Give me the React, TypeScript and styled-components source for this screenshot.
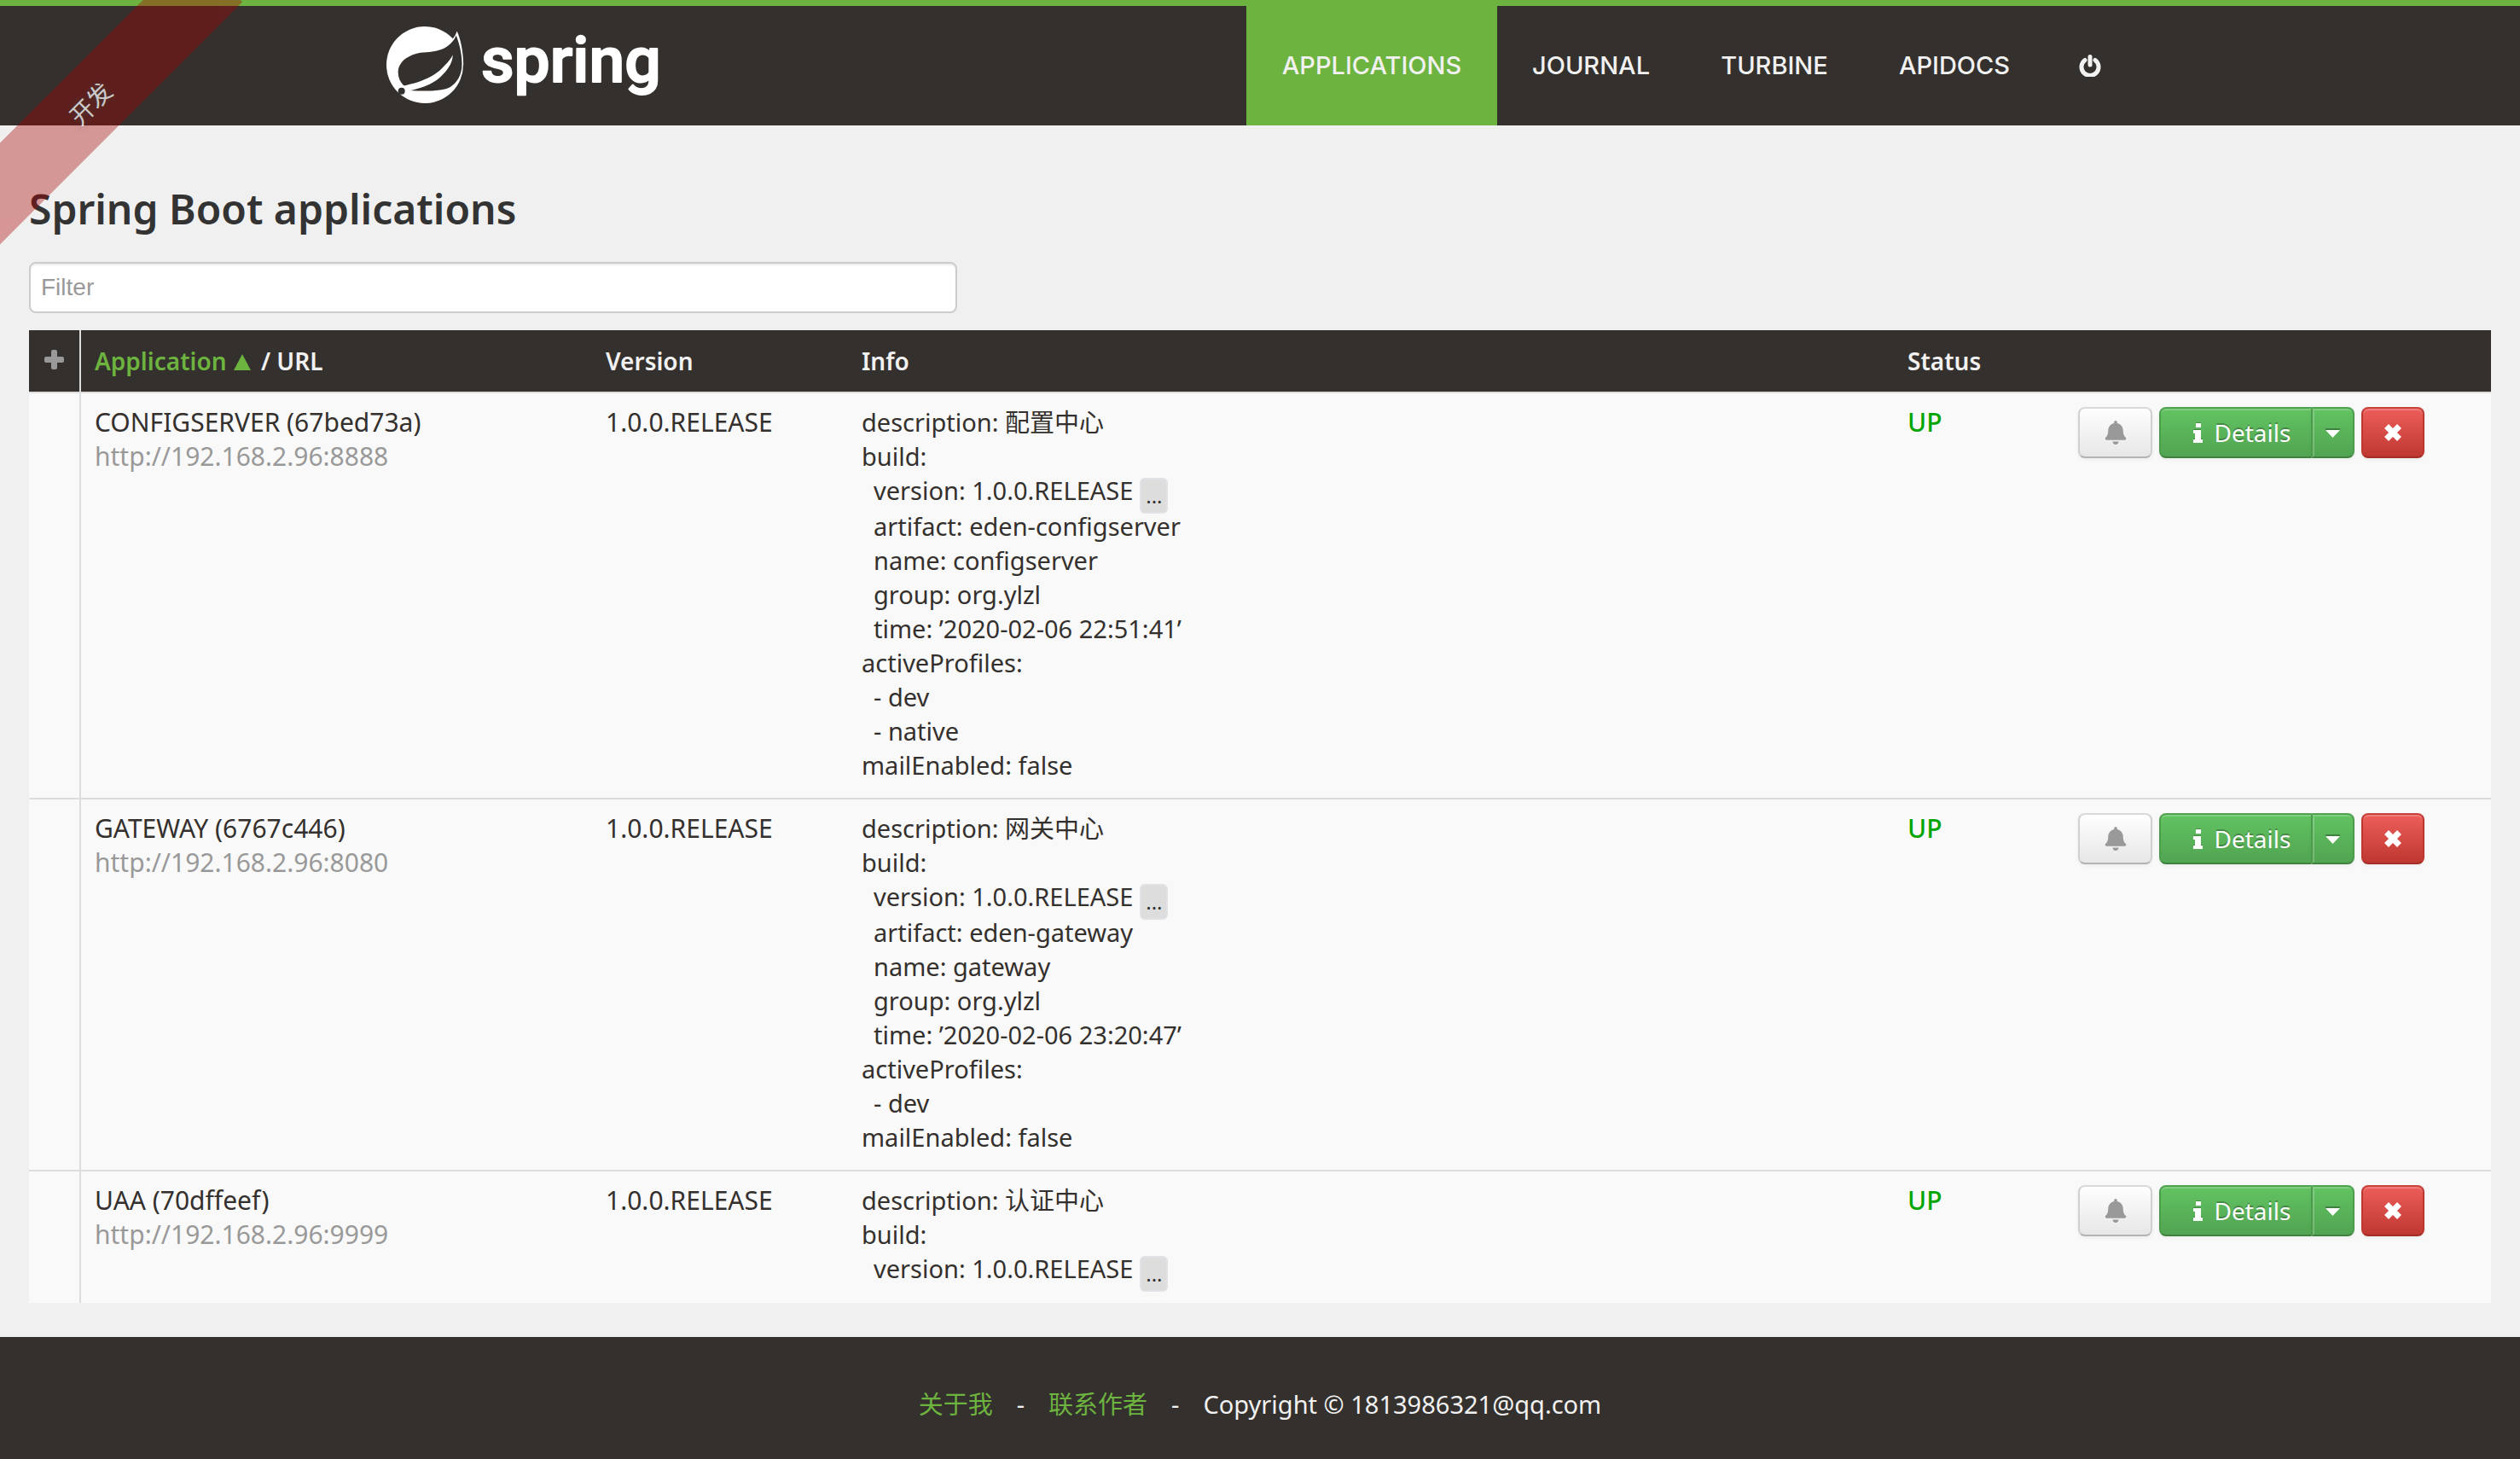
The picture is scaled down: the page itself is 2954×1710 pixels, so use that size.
import React from "react";
import styled, { createGlobalStyle, css } from "styled-components";
import { FaBell } from "react-icons/fa";

const sans = `"Noto Sans", "Noto Sans CJK SC", sans-serif`;

const GlobalStyle = createGlobalStyle`
  *, *::before, *::after { box-sizing: border-box; }
  body {
    margin: 0;
    background: #f0f0f0;
    color: #34302d;
    font: 29px/40px ${sans};
  }
  #root { overflow-x: hidden; position: relative; }
  a { color: inherit; text-decoration: none; }
`;

const Page = styled.div`
  min-height: 100vh;
  display: flex;
  flex-direction: column;
`;

const Ribbon = styled.a`
  position: absolute;
  z-index: 2;
  left: -104px;
  top: 79px;
  width: 420px;
  transform: rotate(-45deg);
  background: rgba(170, 0, 0, 0.5);
  opacity: 0.75;
  font-size: 28px;
  line-height: 84px;
  text-align: center;
  && { color: #fff; }
  text-shadow: 0 0 10px #444;
`;

const Header = styled.header`
  background: #34302d;
  border-top: 7px solid #6db33f;
`;

const HeaderInner = styled.div`
  max-width: 2050px;
  height: 140px;
  margin: 0 auto;
  display: flex;
  justify-content: space-between;
`;

const LogoLink = styled.a`
  padding-top: 11px;
  svg { display: block; }
`;

const Nav = styled.nav`
  display: grid;
  grid-template-columns: 294px 220px 210px 212px 105px;
`;

const NavLink = styled.a<{ $active?: boolean }>`
  display: flex;
  align-items: center;
  justify-content: center;
  font-family: Inter, sans-serif;
  font-weight: 500;
  background: ${(p) => (p.$active ? "#6db33f" : "transparent")};
  && { color: #f1f1f1; }
`;

const Main = styled.main`
  padding: 68px 34px 40px;
`;

const Title = styled.h1`
  margin: 0 0 32px;
  font-size: 48px;
  line-height: 60px;
  font-weight: 600;
  color: #333;
`;

const FilterInput = styled.input`
  display: block;
  width: 1088px;
  max-width: 100%;
  height: 60px;
  margin-bottom: 20px;
  padding: 8px 12px;
  border: 2px solid #ccc;
  border-radius: 8px;
  background: #fff;
  box-shadow: inset 0 2px 2px rgba(0, 0, 0, 0.075);
  font: 28px/40px "Liberation Sans", Arial, sans-serif;
  &::placeholder { color: #999; opacity: 1; }
`;

const Table = styled.table`
  width: 100%;
  table-layout: fixed;
  border-collapse: separate;
  border-spacing: 0;
  background: #f9f9f9;
`;

const Col = styled.col<{ $w?: number }>`
  ${(p) => p.$w && css`width: ${p.$w}px;`}
`;

const Th = styled.th`
  padding: 16px;
  text-align: left;
  background: #34302d;
  color: #f1f1f1;
  font-size: 28px;
  font-weight: 600;
  &:first-child { padding: 0; }
  &:nth-child(2) { border-left: 2px solid #ddd; }
`;

const Td = styled.td<{ $large?: boolean }>`
  padding: 14px 16px 18px;
  vertical-align: top;
  border-top: 2px solid #ddd;
  font-size: ${(p) => (p.$large ? 30 : 29)}px;
  &:nth-child(2) { border-left: 2px solid #ddd; }
`;

const ExpandButton = styled.button`
  display: flex;
  justify-content: center;
  width: 100%;
  padding: 0 0 4px;
  border: 0;
  background: none;
`;

const SortLink = styled.a`
  && { color: #6db33f; }
`;

const SortArrow = styled.svg`
  margin: 0 3px 0 6px;
`;

const Url = styled.a`
  display: block;
  && { color: #999; }
`;

const InfoLine = styled.div<{ $indent?: boolean }>`
  padding-left: ${(p) => (p.$indent ? 14 : 0)}px;
`;

const ToggleLine = styled(InfoLine)`
  display: flex;
  gap: 8px;
  height: 42px;
`;

const MoreButton = styled.button`
  width: 33px;
  height: 42px;
  margin-top: 5px;
  padding: 0;
  border: 2px solid #e1e1e6;
  border-radius: 6px;
  background: #ddd;
  color: #34302d;
  font: 24px/36px ${sans};
`;

const StatusText = styled.span`
  color: #00a500;
  font-weight: 500;
`;

const Actions = styled.div`
  display: flex;
  gap: 8px;
  margin-top: 2px;
`;

const Group = styled.div`
  display: flex;
`;

const tones = {
  plain: css`
    color: #999;
    background-image: linear-gradient(#fff, #e6e6e6);
    border-color: #d9d9d9 #d0d0d0 #b3b3b3;
  `,
  success: css`
    color: #fff;
    text-shadow: 0 -2px 0 rgba(0, 0, 0, 0.25);
    background-image: linear-gradient(#62c462, #51a351);
    border-color: #51a351 #4c9c4c #408140;
  `,
  danger: css`
    color: #fff;
    background-image: linear-gradient(#ee5f5b, #bd362f);
    border-color: #c9433d #bd362f #a52d27;
  `,
};

const Button = styled.button<{ $tone: keyof typeof tones; $w: number; $join?: "left" | "right" }>`
  display: flex;
  align-items: center;
  justify-content: center;
  gap: 14px;
  width: ${(p) => p.$w}px;
  height: 60px;
  padding: 0;
  border: 2px solid;
  border-radius: ${(p) => (p.$join === "left" ? "8px 0 0 8px" : p.$join === "right" ? "0 8px 8px 0" : "8px")};
  background-origin: border-box;
  box-shadow: inset 0 2px 0 rgba(255, 255, 255, 0.2), 0 2px 4px rgba(0, 0, 0, 0.05);
  font: 28px/40px ${sans};
  ${(p) => tones[p.$tone]}
  ${(p) => p.$join === "left" && css`padding-left: 14px; border-right: 0;`}
  ${(p) =>
    p.$join === "right" &&
    css`box-shadow: inset 2px 2px 0 rgba(255, 255, 255, 0.2), 0 2px 4px rgba(0, 0, 0, 0.05);`}
`;

const Footer = styled.footer`
  flex: 1;
  padding: 59px 34px 43px;
  background: #34302d;
  color: #f1f1f1;
  display: flex;
  justify-content: center;
  gap: 28px;
`;

const FooterLink = styled.a`
  && { color: #6db33f; }
`;

const Logo = () => (
  <svg width="325" height="108" viewBox="0 -12 325 108" role="img" aria-label="spring">
    <circle cx="46" cy="46" r="45" fill="#fff" />
    <path d="M76 18C80 15 82 11 83.700 6.500C88 16 91 30 91.200 46L80 40Z" fill="#fff" />
    <path
      d="M82.700 11.500C79 21 70 27.500 60 29.500C54 31 50 31 44 31.500C29 33 14.700 41 14.700 55C14.700 61 17 66 21 70L28 76C48 77 66 77 75 72.500C84 67 89.500 58 89.500 45C89.500 32 86 20 82.700 11.500Z"
      fill="#34302d"
    />
    <path
      d="M18 71C40 67 58 60 69 47C74 42 77 38 78.700 34.500C79 44 71 55 61 63C52 69.500 42 73.500 27 76.500L18 78Z"
      fill="#fff"
    />
    <circle cx="18.700" cy="76.700" r="4" fill="#34302d" />
    <text x="112" y="66" fill="#fff" stroke="#fff" strokeWidth="2" strokeLinejoin="round"
      fontFamily="Roboto, sans-serif" fontWeight="500" fontSize="75">spring</text>
  </svg>
);

const PowerIcon = () => (
  <svg width="26" height="26" viewBox="0 0 26 26" fill="none" stroke="currentColor" strokeWidth="5" strokeLinecap="round">
    <path d="M7 6.500A10 10 0 1 0 19 6.500" />
    <path d="M13 2.500V12" />
  </svg>
);

const PlusIcon = () => (
  <svg width="23" height="23" viewBox="0 0 23 23" fill="#999">
    <rect x="8" y="0" width="7" height="23" rx="2" />
    <rect x="0" y="8" width="23" height="7" rx="2" />
  </svg>
);

const InfoIcon = () => (
  <svg width="11" height="24" viewBox="0 0 11 24">
    <path d="M3 0H9V4H3ZM0 8H9V19H11V23H0V19H2V12H0Z" fill="#000" fillOpacity="0.25" />
    <path d="M3 1H9V6H3ZM0 9H9V20H11V24H0V20H2V13H0Z" fill="#fff" />
  </svg>
);

const CaretIcon = () => (
  <svg width="17" height="11" viewBox="0 0 17 11">
    <path d="M0 0H17V3H0Z" fill="#000" fillOpacity="0.3" />
    <path d="M0 2H17L8.500 11Z" fill="#fff" />
  </svg>
);

const CrossIcon = () => (
  <svg width="20" height="20" viewBox="0 0 20 20" stroke="#fff" strokeWidth="7" strokeLinecap="square">
    <path d="M5 5L15 15M15 5L5 15" />
  </svg>
);

type Line = { text: string; indent?: boolean; toggle?: boolean };
type Application = { name: string; url: string; version: string; info: Line[] };

const line = (text: string): Line => ({ text });
const sub = (text: string, toggle = false): Line => ({ text, indent: true, toggle });

const apps: Application[] = [
  {
    name: "CONFIGSERVER (67bed73a)",
    url: "http://192.168.2.96:8888",
    version: "1.0.0.RELEASE",
    info: [
      line("description: 配置中心"),
      line("build:"),
      sub("version: 1.0.0.RELEASE", true),
      sub("artifact: eden-configserver"),
      sub("name: configserver"),
      sub("group: org.ylzl"),
      sub("time: ’2020-02-06 22:51:41’"),
      line("activeProfiles:"),
      sub("- dev"),
      sub("- native"),
      line("mailEnabled: false"),
    ],
  },
  {
    name: "GATEWAY (6767c446)",
    url: "http://192.168.2.96:8080",
    version: "1.0.0.RELEASE",
    info: [
      line("description: 网关中心"),
      line("build:"),
      sub("version: 1.0.0.RELEASE", true),
      sub("artifact: eden-gateway"),
      sub("name: gateway"),
      sub("group: org.ylzl"),
      sub("time: ’2020-02-06 23:20:47’"),
      line("activeProfiles:"),
      sub("- dev"),
      line("mailEnabled: false"),
    ],
  },
  {
    name: "UAA (70dffeef)",
    url: "http://192.168.2.96:9999",
    version: "1.0.0.RELEASE",
    info: [line("description: 认证中心"), line("build:"), sub("version: 1.0.0.RELEASE", true)],
  },
];

const AppRow = ({ app }: { app: Application }) => (
  <tr>
    <Td />
    <Td $large>
      {app.name}
      <Url href="#">{app.url}</Url>
    </Td>
    <Td $large>{app.version}</Td>
    <Td>
      {app.info.map((l) =>
        l.toggle ? (
          <ToggleLine key={l.text} $indent={l.indent}>
            {l.text}
            <MoreButton type="button">...</MoreButton>
          </ToggleLine>
        ) : (
          <InfoLine key={l.text} $indent={l.indent}>{l.text}</InfoLine>
        )
      )}
    </Td>
    <Td $large><StatusText>UP</StatusText></Td>
    <Td>
      <Actions>
        <Button type="button" $tone="plain" $w={87} aria-label="Notifications"><FaBell size={28} /></Button>
        <Group>
          <Button type="button" $tone="success" $w={178} $join="left"><InfoIcon />Details</Button>
          <Button type="button" $tone="success" $w={51} $join="right" aria-label="More actions"><CaretIcon /></Button>
        </Group>
        <Button type="button" $tone="danger" $w={74} aria-label="Remove"><CrossIcon /></Button>
      </Actions>
    </Td>
  </tr>
);

export default function App() {
  return (
    <Page>
      <GlobalStyle />
      <Ribbon href="#">开发</Ribbon>
      <Header>
        <HeaderInner>
          <LogoLink href="#"><Logo /></LogoLink>
          <Nav>
            <NavLink href="#" $active>APPLICATIONS</NavLink>
            <NavLink href="#">JOURNAL</NavLink>
            <NavLink href="#">TURBINE</NavLink>
            <NavLink href="#">APIDOCS</NavLink>
            <NavLink href="#" aria-label="Log out"><PowerIcon /></NavLink>
          </Nav>
        </HeaderInner>
      </Header>
      <Main>
        <Title>Spring Boot applications</Title>
        <FilterInput type="text" placeholder="Filter" aria-label="Filter" />
        <Table>
          <colgroup>
            <Col $w={59} />
            <Col $w={601} />
            <Col $w={300} />
            <Col />
            <Col $w={200} />
            <Col $w={500} />
          </colgroup>
          <thead>
            <tr>
              <Th><ExpandButton type="button" aria-label="Expand all"><PlusIcon /></ExpandButton></Th>
              <Th>
                <SortLink href="#">
                  Application
                  <SortArrow width="24" height="20" viewBox="0 0 24 20"><path d="M2 20L12 1L22 20Z" fill="#6db33f" /></SortArrow>
                </SortLink>{" "}
                / URL
              </Th>
              <Th>Version</Th>
              <Th>Info</Th>
              <Th>Status</Th>
              <Th />
            </tr>
          </thead>
          <tbody>{apps.map((a) => <AppRow key={a.name} app={a} />)}</tbody>
        </Table>
      </Main>
      <Footer>
        <FooterLink href="#">关于我</FooterLink>
        <span>-</span>
        <FooterLink href="#">联系作者</FooterLink>
        <span>-</span>
        <span>Copyright © 1813986321@qq.com</span>
      </Footer>
    </Page>
  );
}
